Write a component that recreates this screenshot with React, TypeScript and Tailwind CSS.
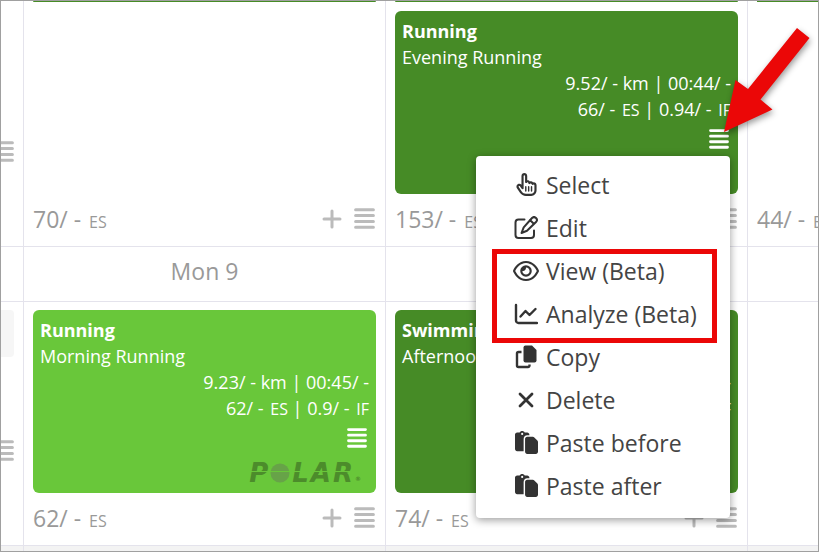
import type { ReactNode } from 'react'
import { FaRegHandPointer, FaRegEye, FaPaste } from 'react-icons/fa6'

function Bars({ className }: { className: string }) {
  return (
    <svg viewBox="0 0 21 21" className={className} fill="none" stroke="currentColor" strokeWidth="3" strokeLinecap="round" aria-hidden="true">
      <path d="M1.6 1.7h17.8M1.6 7.5h17.8M1.6 13.4h17.8M1.6 19.2h17.8" />
    </svg>
  )
}

function PlusIcon() {
  return (
    <svg viewBox="0 0 20 20" className="size-5" fill="none" stroke="currentColor" strokeWidth="3" strokeLinecap="round" aria-hidden="true">
      <path d="M10 2v16M2 10h16" />
    </svg>
  )
}

function EditIcon() {
  return (
    <svg viewBox="0 0 24 24" className="size-6" fill="none" stroke="currentColor" strokeWidth="2" strokeLinecap="round" strokeLinejoin="round" aria-hidden="true">
      <path d="M10.5 3.5H4.5a3 3 0 0 0-3 3V19a3 3 0 0 0 3 3H17a3 3 0 0 0 3-3v-4.5" />
      <path d="M18 2a2.8 2.8 0 0 1 4 4L13 14.8l-5.5 2.2 2.2-5.6zM16 4l4 4" />
    </svg>
  )
}

function ChartIcon() {
  return (
    <svg viewBox="0 0 24 24" className="size-6" fill="none" stroke="currentColor" strokeWidth="2.4" strokeLinecap="round" strokeLinejoin="round" aria-hidden="true">
      <path d="M2 3v15.5A2.5 2.5 0 0 0 4.500 21H23" />
      <path d="M6.5 14.500l5-5.500 4 4 6-6" />
    </svg>
  )
}

function CopyIcon() {
  return (
    <svg viewBox="0 0 24 24" className="size-6" fill="currentColor" aria-hidden="true">
      <path d="M11.5 0.5h6.5l4.5 4.5v10.5a2 2 0 0 1-2 2h-9a2 2 0 0 1-2-2v-13a2 2 0 0 1 2-2z" />
      <path d="M7.5 7H4.5A1.5 1.5 0 0 0 3 8.5v12A1.5 1.5 0 0 0 4.5 22H14a1.5 1.5 0 0 0 1.5-1.5V19.5" fill="none" stroke="currentColor" strokeWidth="2.4" />
    </svg>
  )
}

function DeleteIcon() {
  return (
    <svg viewBox="0 0 24 24" className="size-6" fill="none" stroke="currentColor" strokeWidth="2.8" strokeLinecap="round" aria-hidden="true">
      <path d="M6 6l12 12M18 6L6 18" />
    </svg>
  )
}

function PolarLogo() {
  return (
    <div className="relative flex items-center gap-0.5 font-['DejaVu_Sans',sans-serif] text-[26px]/5 font-bold italic text-[#4c8c2b]">
      <span>P</span>
      <svg viewBox="0 0 20 20" className="size-5" aria-hidden="true">
        <circle cx="10" cy="10" r="9.5" fill="#67a348" />
      </svg>
      <span>L</span>
      <span>A</span>
      <span>R</span>
      <span className="self-end text-[6px]/2">®</span>
      <div className="absolute inset-x-0 top-2 h-px bg-[#69c73a]" />
    </div>
  )
}

type Workout = {
  sport: string
  title: string
  distance: string
  score: string
  intensity: string
}

function WorkoutCard({ workout, className, children }: { workout: Workout; className: string; children?: ReactNode }) {
  return (
    <article className={`relative flex h-[183px] shrink-0 flex-col rounded-md px-[7px] pt-[7px] text-lg/[26px] text-white ${className}`}>
      <h3 className="font-bold">{workout.sport}</h3>
      <p>{workout.title}</p>
      <p className="text-right whitespace-nowrap">{workout.distance}</p>
      <p className="text-right whitespace-nowrap">
        {workout.score} <small className="ml-0.5 text-base/5">ES</small> | {workout.intensity} <small className="ml-0.5 text-base/5">IF</small>
      </p>
      <button type="button" aria-label="Workout menu" className="mt-[7px] mr-0.5 self-end">
        <Bars className="size-5" />
      </button>
      {children}
    </article>
  )
}

function DayFooter({ total }: { total: string }) {
  return (
    <div className="mt-auto flex h-[52px] items-center justify-between pb-[3px] text-[#999]">
      <p className="text-[23px]/8 whitespace-nowrap">
        {total} <small className="ml-0.5 text-base">ES</small>
      </p>
      <div className="mr-px flex items-center gap-3 text-[#bbb]">
        <button type="button" aria-label="Add workout"><PlusIcon /></button>
        <button type="button" aria-label="Day menu"><Bars className="size-[21px]" /></button>
      </div>
    </div>
  )
}

const menuItems = [
  { label: 'Select', icon: <FaRegHandPointer className="size-[23px]" /> },
  { label: 'Edit', icon: <EditIcon /> },
  { label: 'View (Beta)', icon: <FaRegEye className="size-[26px]" /> },
  { label: 'Analyze (Beta)', icon: <ChartIcon /> },
  { label: 'Copy', icon: <CopyIcon /> },
  { label: 'Delete', icon: <DeleteIcon /> },
  { label: 'Paste before', icon: <FaPaste className="size-[23px]" /> },
  { label: 'Paste after', icon: <FaPaste className="size-[23px]" /> },
]

function ContextMenu() {
  return (
    <div className="absolute top-[145px] right-2 z-10 w-[254px] rounded-sm bg-white pt-[7px] pb-[11px] shadow-[0_2px_8px_rgba(0,0,0,0.4)]">
      <ul>
        {menuItems.map(item => (
          <li key={item.label}>
            <button type="button" className="flex h-[43px] w-full items-center gap-[7px] pl-[37px] text-[23px]/8 text-[#444]">
              <span className="flex w-[26px] justify-center text-[#333]">{item.icon}</span>
              {item.label}
            </button>
          </li>
        ))}
      </ul>
      <div className="pointer-events-none absolute top-[93px] left-4 h-[94px] w-[225px] border-5 border-[#eb0707]" />
    </div>
  )
}

function Arrow() {
  return (
    <svg viewBox="0 0 90 110" className="pointer-events-none absolute top-4 -right-[74px] z-20 h-[110px] w-[90px] drop-shadow-[1px_3px_3px_rgba(0,0,0,0.4)]" aria-hidden="true">
      <path d="M75 1l12.5 10L38.500 72.500 50.500 82.500 2 105 13.500 53 26 62z" fill="#eb0707" />
    </svg>
  )
}

const evening: Workout = { sport: 'Running', title: 'Evening Running', distance: '9.52/ - km | 00:44/ -', score: '66/ -', intensity: '0.94/ -' }
const morning: Workout = { sport: 'Running', title: 'Morning Running', distance: '9.23/ - km | 00:45/ -', score: '62/ -', intensity: '0.9/ -' }
const swimming: Workout = { sport: 'Swimming', title: 'Afternoon Swimming', distance: '1.50/ - km | 00:40/ -', score: '74/ -', intensity: '0.9/ -' }

export default function App() {
  return (
    <main className="overflow-hidden border border-[#a0a0a0] bg-white font-['Open_Sans',sans-serif]">
      <div className="grid grid-cols-[23px_362fr_362fr_70fr] divide-x divide-[#e4e3ec]">
        <section className="flex h-[245px] flex-col items-end overflow-hidden pt-[140px] pr-[9px] text-[#bbb]">
          <Bars className="size-[21px] shrink-0" />
        </section>
        <section className="flex h-[245px] flex-col px-[9px]">
          <div className="h-px rounded-b-full bg-[#468b26]" />
          <DayFooter total="70/ -" />
        </section>
        <section className="flex h-[245px] flex-col px-[9px]">
          <div className="mb-[9px] h-px shrink-0 rounded-b-full bg-[#468b26]" />
          <WorkoutCard workout={evening} className="bg-[#468b26]">
            <ContextMenu />
            <Arrow />
          </WorkoutCard>
          <DayFooter total="153/ -" />
        </section>
        <section className="flex h-[245px] min-w-0 flex-col overflow-hidden px-[9px]">
          <div className="-mr-[9px] h-px bg-[#468b26]" />
          <DayFooter total="44/ -" />
        </section>
      </div>
      <div className="grid h-14 grid-cols-[23px_362fr_362fr_70fr] divide-x divide-[#e4e3ec] border-y border-[#e4e3ec]">
        <div />
        <h2 className="pt-2 text-center text-[23px]/8 text-[#999]">Mon 9</h2>
        <div />
        <div />
      </div>
      <div className="grid grid-cols-[23px_362fr_362fr_70fr] divide-x divide-[#e4e3ec] border-b border-[#e4e3ec]">
        <section className="flex h-[243px] flex-col items-end overflow-hidden pt-2 pr-[9px] text-[#bbb]">
          <div className="h-[47px] w-full rounded-r-sm bg-[#f6f6f6]" />
          <Bars className="mt-[83px] size-[21px] shrink-0" />
        </section>
        <section className="flex h-[243px] flex-col px-[9px] pt-2">
          <WorkoutCard workout={morning} className="bg-[#69c73a]">
            <div className="mt-[15px] mr-2 self-end"><PolarLogo /></div>
          </WorkoutCard>
          <DayFooter total="62/ -" />
        </section>
        <section className="flex h-[243px] flex-col px-[9px] pt-2">
          <WorkoutCard workout={swimming} className="bg-[#468b26]" />
          <DayFooter total="74/ -" />
        </section>
        <section />
      </div>
      <div className="grid h-[5px] grid-cols-[23px_362fr_362fr_70fr] divide-x divide-[#e4e3ec] bg-[#f3f3f3]">
        <div />
        <div />
        <div />
        <div />
      </div>
    </main>
  )
}
